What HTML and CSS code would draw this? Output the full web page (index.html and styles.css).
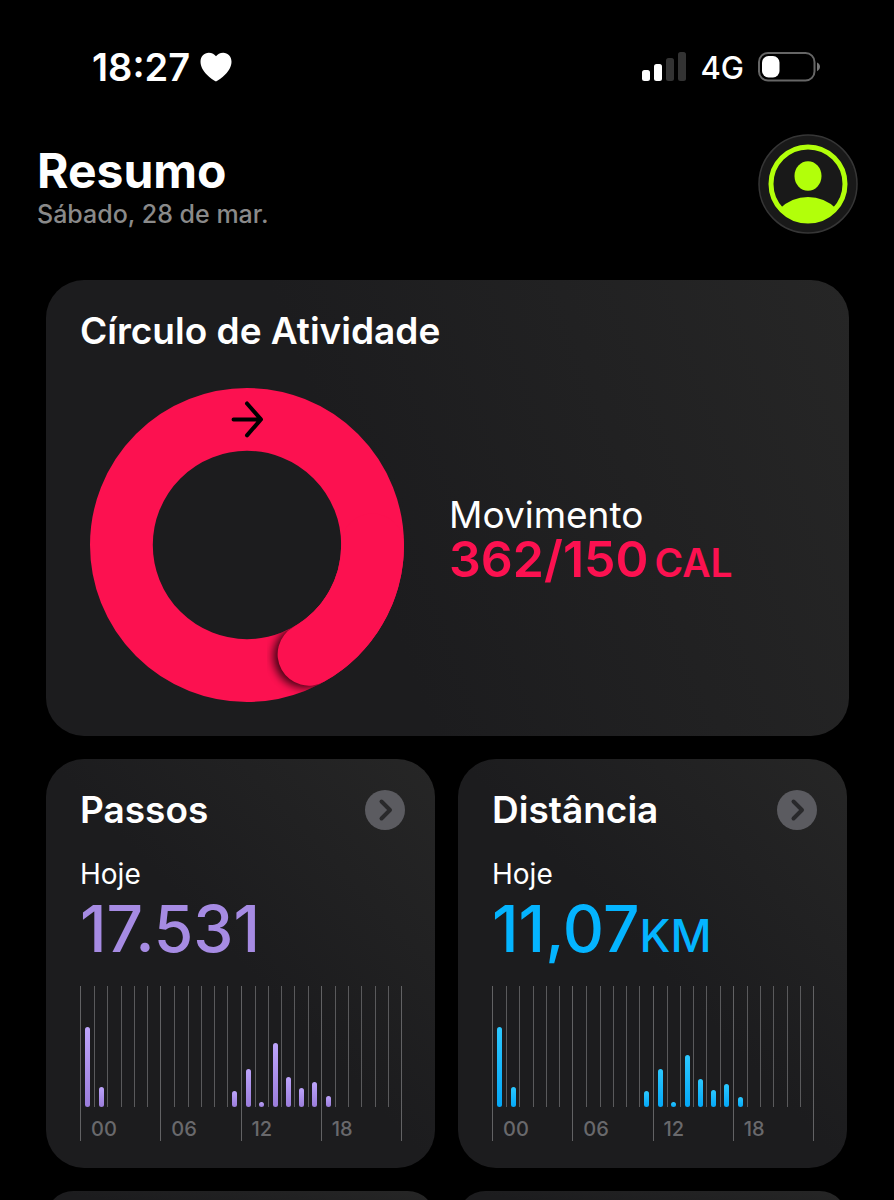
FILE: index.html
```html
<!DOCTYPE html>
<html lang="pt-BR">
<head>
  <meta charset="UTF-8" />
  <meta name="viewport" content="width=device-width, initial-scale=1.0"/>
  <title>Resumo</title>
  <link rel="stylesheet" href="styles.css">
</head>
<body>
  <div class="status-bar">
    <div class="status-left">
      <span class="time">18:27</span>
      <svg class="heart" width="32" height="30" viewBox="0 0 32 30"><path fill="#fff" d="M16 29.500C12 27.500 .5 19.500 .5 9.800C.5 4.500 4.200 .8 8.800 .8C12 .8 14.600 2.500 16 4.200C17.400 2.500 20 .8 23.200 .8C27.800 .8 31.500 4.500 31.500 9.800C31.500 19.500 20 27.500 16 29.500Z"/></svg>
    </div>
    <div class="status-right">
      <svg width="45" height="30" viewBox="0 0 45 30">
        <rect x="1" y="18" width="8" height="11" rx="2.500" fill="#fff"/>
        <rect x="13" y="12" width="8" height="17" rx="2.500" fill="#fff"/>
        <rect x="25" y="6" width="8" height="23" rx="2.500" fill="#333"/>
        <rect x="37" y="0" width="8" height="29" rx="2.500" fill="#333"/>
      </svg>
      <span class="network">4G</span>
      <svg width="62" height="30" viewBox="0 0 62 30">
        <rect x="1" y="1" width="55.500" height="27.500" rx="9" fill="none" stroke="#666" stroke-width="2"/>
        <rect x="4" y="4" width="17.500" height="21.500" rx="6.500" fill="#fff"/>
        <path d="M59 10.500C61 11.500 62 13 62 14.800S61 18.200 59 19.200Z" fill="#777"/>
      </svg>
    </div>
  </div>

  <header>
    <div class="heading">
      <h1>Resumo</h1>
      <p class="date">Sábado, 28 de mar.</p>
    </div>
    <button class="avatar" aria-label="Perfil">
      <svg width="100" height="100" viewBox="0 0 100 100">
        <defs>
          <clipPath id="face"><circle cx="50" cy="50" r="38"/></clipPath>
        </defs>
        <circle cx="50" cy="50" r="49" fill="#191919" stroke="#363636" stroke-width="1.500"/>
        <circle cx="50" cy="50" r="37" fill="none" stroke="#b2ff0a" stroke-width="5"/>
        <ellipse cx="50" cy="42" rx="13.500" ry="14.700" fill="#b2ff0a"/>
        <circle cx="50" cy="103" r="40" fill="#b2ff0a" clip-path="url(#face)"/>
      </svg>
    </button>
  </header>

  <main>
    <section class="card activity">
      <h2>Círculo de Atividade</h2>
      <div class="activity-body">
        <svg class="ring" width="314" height="314" viewBox="0 0 315 315">
          <defs>
            <mask id="ringMask">
              <circle cx="157.500" cy="157.500" r="126" fill="none" stroke="#fff" stroke-width="63"/>
            </mask>
            <filter id="soft" x="-50%" y="-50%" width="200%" height="200%">
              <feGaussianBlur stdDeviation="4.500"/>
            </filter>
          </defs>
          <circle cx="157.500" cy="157.500" r="126" fill="none" stroke="#fc1150" stroke-width="63"/>
          <g mask="url(#ringMask)">
            <circle cx="216" cy="269" r="32" fill="#000" opacity=".75" filter="url(#soft)"/>
          </g>
          <path d="M283.500 157.500A126 126 0 0 1 219.700 267.100" fill="none" stroke="#fc1150" stroke-width="63" stroke-linecap="round"/>
          <path d="M144 31.500H171M157.500 15.500L171.500 31.500L157.500 47.500" fill="none" stroke="#000" stroke-width="4" stroke-linecap="round" stroke-linejoin="round"/>
        </svg>
        <div class="move">
          <p class="move-label">Movimento</p>
          <p class="move-value">362/150<span class="unit">CAL</span></p>
        </div>
      </div>
    </section>

    <div class="row">
      <section class="card steps">
        <div class="card-head">
          <h2>Passos</h2>
          <button class="more" aria-label="Ver passos">
            <svg width="40" height="40" viewBox="0 0 40 40"><path d="M16.500 11.500L25 20L16.500 28.500" fill="none" stroke="#29292b" stroke-width="4" stroke-linecap="round" stroke-linejoin="round"/></svg>
          </button>
        </div>
        <p class="today">Hoje</p>
        <p class="value">17.531</p>
        <div class="chart" data-values="80,20,0,0,0,0,0,0,0,0,0,16,38,5,64,30,19,25,11,0,0,0,0,0"></div>
      </section>

      <section class="card distance">
        <div class="card-head">
          <h2>Distância</h2>
          <button class="more" aria-label="Ver distância">
            <svg width="40" height="40" viewBox="0 0 40 40"><path d="M16.500 11.500L25 20L16.500 28.500" fill="none" stroke="#29292b" stroke-width="4" stroke-linecap="round" stroke-linejoin="round"/></svg>
          </button>
        </div>
        <p class="today">Hoje</p>
        <p class="value">11,07<span class="unit">KM</span></p>
        <div class="chart" data-values="80,20,0,0,0,0,0,0,0,0,0,16,38,5,52,28,17,23,10,0,0,0,0,0"></div>
      </section>

      <section class="card"></section>
      <section class="card"></section>
    </div>
  </main>

  <script>
    const labels = ['00', '06', '12', '18'];

    // one block per six hours, one column per hour
    document.querySelectorAll('.chart').forEach(chart => {
      const values = chart.dataset.values.split(',').map(Number);

      labels.forEach((label, i) => {
        const quarter = document.createElement('div');
        quarter.className = 'quarter';

        const hours = document.createElement('div');
        hours.className = 'hours';
        values.slice(i * 6, i * 6 + 6).forEach(value => {
          const hour = document.createElement('div');
          hour.className = 'hour';
          if (value > 0) {
            const bar = document.createElement('div');
            bar.className = 'bar';
            bar.style.height = value + 'px';
            hour.appendChild(bar);
          }
          hours.appendChild(hour);
        });

        const text = document.createElement('span');
        text.className = 'hour-label';
        text.textContent = label;

        quarter.append(hours, text);
        chart.appendChild(quarter);
      });
    });
  </script>
</body>
</html>
```

FILE: styles.css
```css
* { box-sizing: border-box; margin: 0; padding: 0; }

body {
  font-family: Inter, "Liberation Sans", sans-serif;
  background: #000;
  color: #fff;
  height: 100vh;
  overflow: hidden;
}

svg { display: block; }

button {
  border: none;
  background: none;
  cursor: pointer;
}

.status-bar {
  display: flex;
  justify-content: space-between;
  align-items: center;
  height: 134px;
  padding: 0 74px 0 92px;
}

.status-left, .status-right {
  display: flex;
  align-items: center;
}

.status-left { gap: 10px; }
.status-right { gap: 14px; }

.time {
  font-size: 38px;
  font-weight: 600;
}

.network {
  font-size: 31px;
  font-weight: 500;
}

header {
  display: flex;
  justify-content: space-between;
  align-items: flex-end;
  padding: 0 36px 46px 37px;
}

.heading { padding-bottom: 5px; }

h1 {
  font-size: 48px;
  line-height: 56px;
  font-weight: 700;
}

.date {
  font-size: 25px;
  line-height: 30px;
  font-weight: 500;
  color: #8a8a8a;
}

.avatar { border-radius: 50%; }

main { padding: 0 45px 0 46px; }

.card {
  background: linear-gradient(to top right, #1c1c1e 50%, #262626);
  border-radius: 38px;
  padding: 28px 30px 27px 34px;
}

h2 {
  font-size: 37px;
  line-height: 46px;
  font-weight: 600;
}

.activity {
  background: linear-gradient(70deg, #1c1c1e 40%, #262626);
  padding-bottom: 34px;
}

.activity-body {
  display: flex;
  align-items: center;
  gap: 45px;
  padding: 34px 0 0 10px;
}

.move { padding-bottom: 10px; }

.move-label {
  font-size: 37px;
  line-height: 38px;
}

.move-value {
  font-size: 50px;
  line-height: 50px;
  font-weight: 600;
  color: #fc1150;
}

.unit { line-height: 1; }

.move-value .unit {
  font-size: 39px;
  margin-left: 6px;
}

.row {
  display: grid;
  grid-template-columns: 1fr 1fr;
  gap: 23px;
  padding: 23px 2px 0 0;
}

.card-head {
  display: flex;
  justify-content: space-between;
  align-items: center;
}

.more {
  background: #5b5b60;
  border-radius: 50%;
}

.today {
  font-size: 28px;
  line-height: 38px;
  margin-top: 22px;
}

.value {
  font-size: 64px;
  line-height: 72px;
  font-weight: 500;
}

.value .unit { font-size: 45px; }

.steps .value { color: #a68be3; }
.distance .value { color: #04b4ff; }

.chart {
  display: grid;
  grid-template-columns: repeat(4, 1fr);
  margin: 21px 3px 0 0;
  border-right: 1px solid #626264;
}

.quarter { border-left: 1px solid #626264; }

.hours {
  display: grid;
  grid-template-columns: repeat(6, 1fr);
  height: 121px;
}

.hour {
  display: flex;
  justify-content: center;
  align-items: flex-end;
  border-left: 1px solid #5a5a5c;
}

.hour:first-child { border-left: none; }

.bar {
  width: 5px;
  border-radius: 3px;
}

.steps .bar { background: linear-gradient(#bda4fb, #9b7ddb); }
.distance .bar { background: linear-gradient(#2cc8ff, #04a8f8); }

.hour-label {
  display: block;
  height: 34px;
  padding: 5px 0 0 10px;
  font-size: 20px;
  line-height: 34px;
  font-weight: 500;
  color: #69696c;
}
```
